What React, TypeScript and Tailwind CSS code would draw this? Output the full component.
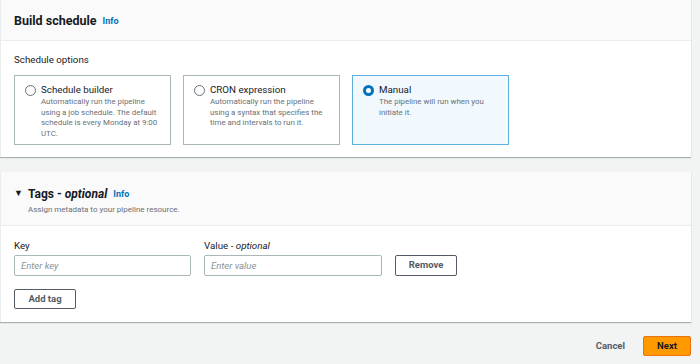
const font = { fontFamily: 'Roboto, "Noto Sans", sans-serif' };

const Radio = ({ checked }: { checked?: boolean }) =>
  checked ? (
    <span className="mt-[2px] inline-block h-[11px] w-[11px] shrink-0 rounded-full border-[3.5px] border-[#0073bb] bg-white" />
  ) : (
    <span className="mt-[2px] inline-block h-[11px] w-[11px] shrink-0 rounded-full border border-[#687078] bg-white" />
  );

const options = [
  {
    title: 'Schedule builder',
    desc: 'Automatically run the pipeline using a job schedule. The default schedule is every Monday at 9:00 UTC.',
  },
  {
    title: 'CRON expression',
    desc: 'Automatically run the pipeline using a syntax that specifies the time and intervals to run it.',
  },
  {
    title: 'Manual',
    desc: 'The pipeline will run when you initiate it.',
    checked: true,
  },
];

const App = () => {
  return (
    <div className="h-[364px] w-[700px] overflow-hidden bg-[#f2f3f3] text-[#16191f]" style={font}>
      <div className="w-[691px] border-l border-[#eaeded] bg-white shadow-[0_1px_1px_0_rgba(0,28,36,0.3)]">
        <div className="flex h-[41px] items-center gap-[6px] border-b border-[#eaeded] bg-[#fafafa] pl-[13px] pt-[2px]">
          <span className="text-[12.5px] font-bold">Build schedule</span>
          <span className="mt-[2px] text-[9px] font-bold text-[#0073bb]">Info</span>
        </div>
        <div className="pb-[12px] pl-[13px] pt-[12px]">
          <div className="text-[9.75px] leading-[14px]">Schedule options</div>
          <div className="mt-[8px] flex gap-[12px]">
            {options.map((o) => (
              <div
                key={o.title}
                className={
                  o.checked
                    ? 'flex h-[70px] w-[157px] gap-[5px] border border-[#5fb0dd] bg-[#f1f8fe] pl-[10px] pr-[6px] pt-[7px]'
                    : 'flex h-[70px] w-[157px] gap-[5px] border border-[#aab7b8] bg-white pl-[10px] pr-[6px] pt-[7px]'
                }
              >
                <Radio checked={o.checked} />
                <div>
                  <div className="text-[9.75px] leading-[13px]">{o.title}</div>
                  <div className="mt-[1px] text-[7.9px] leading-[10.7px] text-[#687078]">{o.desc}</div>
                </div>
              </div>
            ))}
          </div>
        </div>
      </div>

      <div className="mt-[15px] w-[691px] border-l border-[#eaeded] bg-white shadow-[0_1px_1px_0_rgba(0,28,36,0.3)]">
        <div className="h-[54px] border-b border-[#eaeded] bg-[#fafafa] pl-[13px] pt-[13px]">
          <div className="flex items-center">
            <span className="w-[14px] text-[9px]">▼</span>
            <span className="text-[12px] font-bold">
              Tags - <i>optional</i>
            </span>
            <span className="ml-[6px] mt-[2px] text-[9px] font-bold text-[#0073bb]">Info</span>
          </div>
          <div className="ml-[14px] mt-[1px] text-[8px] text-[#687078]">Assign metadata to your pipeline resource.</div>
        </div>
        <div className="pb-[13px] pl-[13px] pt-[13px]">
          <div className="flex items-end gap-[13px]">
            <div className="flex w-[177px] flex-col gap-[2px]">
              <span className="text-[9.75px] leading-[14px]">Key</span>
              <input
                placeholder="Enter key"
                className="h-[21px] rounded-[2px] border border-[#aab7b8] px-[6px] text-[9.5px] italic placeholder:text-[#879596]"
              />
            </div>
            <div className="flex w-[178px] flex-col gap-[2px]">
              <span className="text-[9.75px] leading-[14px]">
                Value - <i>optional</i>
              </span>
              <input
                placeholder="Enter value"
                className="h-[21px] rounded-[2px] border border-[#aab7b8] px-[6px] text-[9.5px] italic placeholder:text-[#879596]"
              />
            </div>
            <button className="h-[21px] w-[62px] rounded-[2px] border border-[#545b64] text-[9.5px] font-bold text-[#545b64]">
              Remove
            </button>
          </div>
          <button className="mt-[13px] h-[20px] w-[62px] rounded-[2px] border border-[#545b64] text-[9.5px] font-bold text-[#545b64]">
            Add tag
          </button>
        </div>
      </div>

      <div className="mt-[14px] flex w-[691px] items-center justify-end gap-[18px]">
        <span className="text-[9.5px] font-bold text-[#545b64]">Cancel</span>
        <button className="h-[20px] w-[48px] rounded-[2px] border border-[#ec7211] bg-[#ff9900] text-[9.5px] font-bold text-[#16191f]">
          Next
        </button>
      </div>
    </div>
  );
};

export default App;
